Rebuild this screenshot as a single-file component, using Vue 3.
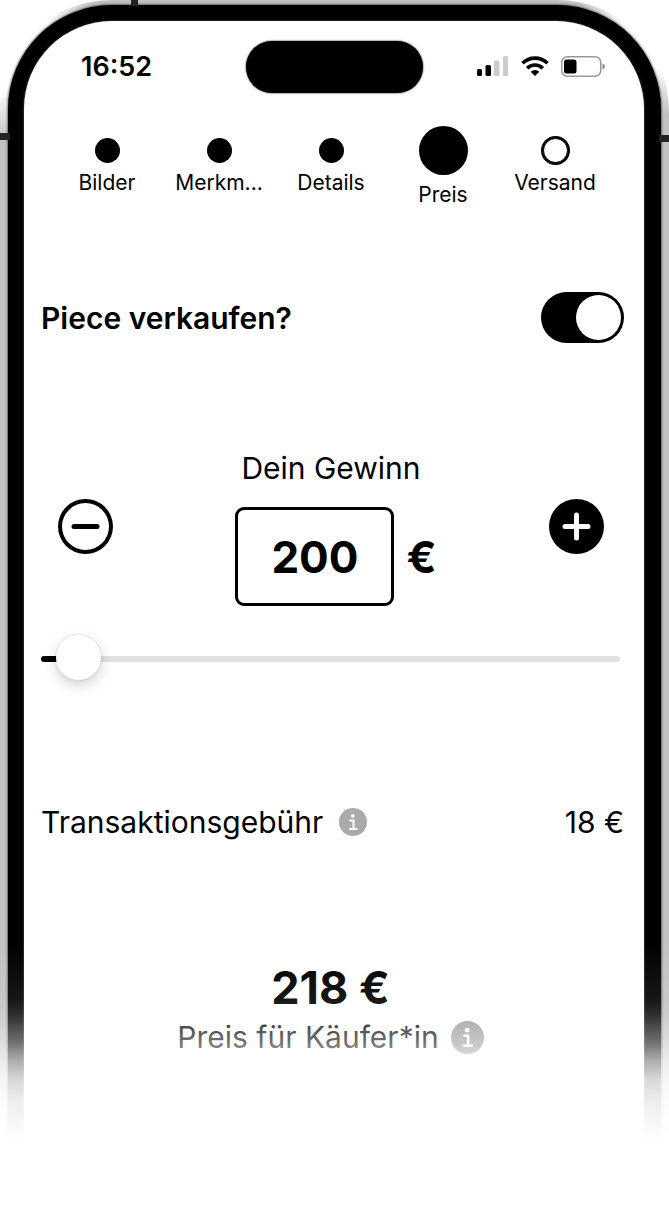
<script setup>
import { computed, ref } from 'vue'

const steps = [
  { label: 'Bilder', state: 'done' },
  { label: 'Merkm...', state: 'done' },
  { label: 'Details', state: 'done' },
  { label: 'Preis', state: 'current' },
  { label: 'Versand', state: 'open' },
]
const selling = ref(true)
const profit = ref(200)
const fee = computed(() => Math.round(profit.value * 0.09))
const total = computed(() => Number(profit.value) + fee.value)
const min = 120
const max = 3000
const fill = computed(() => ({ '--fill': `${((profit.value - min) / (max - min)) * 100}%` }))
</script>

<template>
  <div class="phone">
    <span class="antenna top"></span>
    <span class="antenna left"></span>
    <span class="antenna right"></span>
    <div class="bezel">
      <main class="screen">
        <header class="status">
          <time class="clock">16:52</time>
          <div class="island"></div>
          <div class="indicators">
            <svg width="32" height="22" viewBox="0 0 32 22" aria-hidden="true">
              <rect x="0" y="13" width="5" height="7" rx="1.5" />
              <rect x="8.5" y="9" width="5.5" height="11" rx="1.5" />
              <rect x="17" y="4.500" width="5.500" height="15.500" rx="1.500" fill="#ccc" />
              <rect x="26" y="0" width="5" height="20" rx="1.500" fill="#ccc" />
            </svg>
            <svg width="28" height="22" viewBox="0 0 28 22" aria-hidden="true">
              <g fill="none" stroke="#000" stroke-width="3.600">
                <path d="M1.500 7.300a17.800 17.800 0 0 1 25 0" />
                <path d="M6.200 12.200a11.200 11.200 0 0 1 15.600 0" />
              </g>
              <path d="M14 20l-4.300-4.300a6.200 6.200 0 0 1 8.600 0z" />
            </svg>
            <svg width="45" height="22" viewBox="0 0 45 22" aria-hidden="true">
              <rect x="0.750" y="0.750" width="39" height="19.500" rx="5.500" fill="none" stroke="#999" stroke-width="1.500" />
              <rect x="3" y="3.500" width="12.500" height="14" rx="2.500" />
              <path d="M41.500 7.500q2.500 1 2.500 3t-2.500 3z" fill="#888" />
            </svg>
          </div>
        </header>

        <ol class="steps">
          <li v-for="s in steps" :key="s.label" :class="['step', s.state]">
            <span class="dot"></span>
            <span>{{ s.label }}</span>
          </li>
        </ol>

        <div class="sell">
          <label for="sell">Piece verkaufen?</label>
          <input id="sell" v-model="selling" class="toggle" type="checkbox" role="switch" />
        </div>

        <section class="stepper">
          <button class="round minus" type="button" aria-label="Weniger" @click="profit--">
            <svg viewBox="0 0 55 55"><path d="M16 27.500h23" /></svg>
          </button>
          <div class="amount">
            <label for="profit">Dein Gewinn</label>
            <div class="field">
              <input id="profit" v-model="profit" type="text" inputmode="numeric" />
              <span>€</span>
            </div>
          </div>
          <button class="round plus" type="button" aria-label="Mehr" @click="profit++">
            <svg viewBox="0 0 55 55"><path d="M16 27.500h23M27.500 16v23" /></svg>
          </button>
        </section>

        <input v-model="profit" class="slider" type="range" :min="min" :max="max" :style="fill" aria-label="Dein Gewinn" />

        <div class="fee">
          <span>Transaktionsgebühr</span>
          <button class="info" type="button" aria-label="Info zur Transaktionsgebühr">
            <svg viewBox="0 0 28 28">
              <circle cx="14" cy="14" r="14" fill="#aaa" />
              <circle cx="13.700" cy="7.800" r="1.900" fill="#fff" />
              <path d="M10.500 12.500h4v8.500M10 21h8.500" fill="none" stroke="#fff" stroke-width="2" />
            </svg>
          </button>
          <span class="value">{{ fee }} €</span>
        </div>

        <section class="total">
          <strong>{{ total }} €</strong>
          <div class="caption">
            <span>Preis für Käufer*in</span>
            <button class="info large" type="button" aria-label="Info zum Preis">
              <svg viewBox="0 0 28 28">
                <circle cx="14" cy="14" r="14" fill="#999" />
                <circle cx="13.700" cy="7.800" r="2" fill="#fff" />
                <path d="M10.500 12.500h4v8.500M10 21h8.500" fill="none" stroke="#fff" stroke-width="2.200" />
              </svg>
            </button>
          </div>
        </section>
      </main>
    </div>
    <div class="fade"></div>
  </div>
</template>

<style>
body {
  background: #fff;
}
</style>

<style scoped>
* {
  box-sizing: border-box;
}
.phone {
  position: relative;
  display: flex;
  min-height: 100vh;
  padding: 5px 8px 0;
  overflow: hidden;
  border-radius: 112px 112px 0 0;
  background:
    radial-gradient(circle at 16px 50px, #fff 40px, transparent 90px),
    radial-gradient(circle at calc(100% - 16px) 36px, #fff 30px, transparent 80px),
    #c2c2c2;
  color: #000;
  font-family: Inter, "Liberation Sans", sans-serif;
}
.bezel {
  flex: 1;
  display: flex;
  min-width: 0;
  padding: 16px 17px 0 16px;
  border-radius: 104px 104px 0 0;
  background: #000;
  box-shadow: 0 0 3px #000;
}
.screen {
  flex: 1;
  min-width: 0;
  padding: 20px 20px 40px 17px;
  border-radius: 88px 88px 0 0;
  background: #fff;
  box-shadow: 0 0 2px #777;
}
.antenna {
  position: absolute;
  background: #222;
}
.antenna.top {
  top: 0;
  left: 131px;
  width: 7px;
  height: 6px;
}
.antenna.left,
.antenna.right {
  top: 133px;
  left: 0;
  width: 10px;
  height: 7px;
}
.antenna.right {
  top: 135px;
  right: 0;
  left: auto;
}
.status {
  display: grid;
  grid-template-columns: 1fr 177px 1fr;
  align-items: center;
  height: 52px;
  padding-left: 4px;
}
.clock {
  padding-left: 36px;
  font-size: 27px;
  font-weight: 600;
  line-height: 32px;
}
.island {
  height: 52px;
  border-radius: 26px;
  background: #000;
  box-shadow: 0 0 2px #000;
}
.indicators {
  display: flex;
  justify-content: flex-end;
  gap: 12px;
  padding-right: 18px;
}
.steps {
  display: flex;
  justify-content: center;
  margin: 33px 0 0;
  padding: 0 3px 0 0;
  list-style: none;
  font-size: 21px;
  line-height: 24px;
}
.step {
  display: flex;
  flex-direction: column;
  align-items: center;
  gap: 8px;
  flex: 0 1 112px;
}
.dot {
  width: 25px;
  height: 25px;
  margin-top: 12px;
  border-radius: 50%;
  background: #000;
}
.current .dot {
  width: 49px;
  height: 49px;
  margin-top: 0;
}
.open .dot {
  border: 1px solid #000;
  background: #fff;
  box-shadow: 0 0 0 2px #000;
}
.sell {
  display: flex;
  align-items: center;
  justify-content: space-between;
  margin-top: 85px;
  font-size: 30px;
  font-weight: 600;
  line-height: 36px;
}
.toggle {
  appearance: none;
  display: flex;
  width: 83px;
  height: 51px;
  margin: 0;
  padding: 3px;
  border-radius: 26px;
  background: #999;
}
.toggle::before {
  content: "";
  width: 45px;
  height: 45px;
  border-radius: 50%;
  background: #fff;
}
.toggle:checked {
  justify-content: flex-end;
  background: #000;
}
.stepper {
  display: flex;
  align-items: flex-start;
  justify-content: space-between;
  margin-top: 107px;
  padding: 0 20px 0 17px;
}
.round {
  width: 55px;
  height: 55px;
  margin-top: 49px;
  padding: 0;
  border: 0;
  border-radius: 50%;
}
.round svg {
  display: block;
  fill: none;
  stroke: currentColor;
  stroke-width: 5;
  stroke-linecap: round;
}
.minus {
  background: #fff;
  box-shadow: inset 0 0 0 4px #000;
  color: #000;
}
.plus {
  background: #000;
  color: #fff;
}
.amount {
  text-align: center;
  font-size: 30px;
  line-height: 36px;
}
.field {
  display: flex;
  align-items: center;
  gap: 12px;
  margin-top: 21px;
  padding-left: 10px;
  font-size: 44px;
  font-weight: 700;
}
.field input {
  width: 159px;
  height: 99px;
  padding: 0;
  border: 3px solid #000;
  border-radius: 9px;
  background: #fff;
  color: #000;
  font: inherit;
  text-align: center;
}
.slider {
  appearance: none;
  display: block;
  width: calc(100% - 4px);
  height: 46px;
  margin: 30px 0 0;
  background: none;
}
.slider::-webkit-slider-runnable-track {
  height: 6px;
  border-radius: 3px;
  background: linear-gradient(90deg, #000 var(--fill), #e1e1e3 var(--fill));
}
.slider::-webkit-slider-thumb {
  appearance: none;
  width: 45px;
  height: 45px;
  margin-top: -21px;
  border-radius: 50%;
  background: #fff;
  box-shadow: 0 5px 14px rgba(0, 0, 0, 0.18), 0 0 3px rgba(0, 0, 0, 0.12);
}
.fee {
  display: flex;
  align-items: center;
  gap: 16px;
  margin-top: 122px;
  font-size: 30px;
  line-height: 36px;
}
.value {
  margin-left: auto;
}
.info {
  width: 28px;
  height: 28px;
  padding: 0;
  border: 0;
  background: none;
}
.info.large {
  width: 33px;
  height: 33px;
}
.info svg {
  display: block;
}
.total {
  margin-top: 124px;
  padding-right: 4px;
  text-align: center;
}
.total strong {
  display: block;
  font-size: 45px;
  font-weight: 700;
  line-height: 48px;
}
.caption {
  display: flex;
  align-items: center;
  justify-content: center;
  gap: 12px;
  margin-top: 7px;
  font-size: 30px;
  line-height: 36px;
}
.fade {
  position: absolute;
  inset: auto 0 0;
  height: 291px;
  background: linear-gradient(
    rgba(255, 255, 255, 0),
    rgba(255, 255, 255, 0.09) 60px,
    rgba(255, 255, 255, 0.2) 77px,
    rgba(255, 255, 255, 0.45) 103px,
    rgba(255, 255, 255, 0.67) 120px,
    rgba(255, 255, 255, 0.85) 140px,
    rgba(255, 255, 255, 0.93) 160px,
    #fff 200px
  );
  pointer-events: none;
}
</style>
